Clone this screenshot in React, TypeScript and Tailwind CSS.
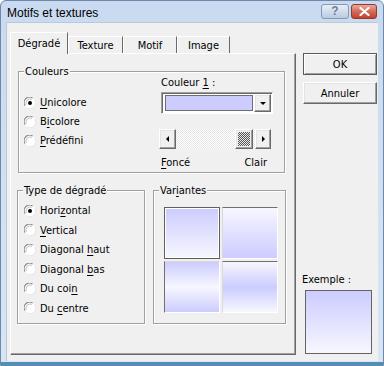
import React from "react";

const font = "font-['Tahoma','DejaVu_Sans_Condensed','Liberation_Sans',sans-serif]";

const raised =
  "border border-t-white border-l-white border-r-[#696969] border-b-[#696969] shadow-[inset_-1px_-1px_0_#a0a0a0,inset_1px_1px_0_#e3e3e3]";

const Radio = ({ checked }: { checked?: boolean }) => (
  <svg width="12" height="12" viewBox="0 0 12 12" className="shrink-0">
    <circle cx="6" cy="6" r="5.5" fill="#fff" />
    <path d="M1.1 8.6 A5.4 5.4 0 0 1 8.6 1.1" stroke="#8c8c8c" strokeWidth="1.1" fill="none" />
    <path d="M2.3 7.8 A4.2 4.2 0 0 1 7.8 2.3" stroke="#bdbdbd" strokeWidth="1" fill="none" />
    <path d="M10.9 3.4 A5.4 5.4 0 0 1 3.4 10.9" stroke="#e6e6e6" strokeWidth="1" fill="none" />
    {checked && <circle cx="6" cy="6" r="2" fill="#000" />}
  </svg>
);

// label with one underlined mnemonic letter
const Mn = ({ text, u }: { text: string; u: number }) => (
  <span>
    {text.slice(0, u)}
    <span className="underline underline-offset-2">{text[u]}</span>
    {text.slice(u + 1)}
  </span>
);

const RadioRow = ({ checked, text, u, h }: { checked?: boolean; text: string; u: number; h: string }) => (
  <div className={`flex items-center gap-[4px] ${h}`}>
    <Radio checked={checked} />
    <Mn text={text} u={u} />
  </div>
);

const GroupBox = ({
  title,
  className,
  children,
}: {
  title: React.ReactNode;
  className: string;
  children: React.ReactNode;
}) => (
  <div
    className={`relative border border-[#a0a0a0] shadow-[inset_1px_1px_0_#fff,1px_1px_0_#fff] ${className}`}
  >
    <div className="absolute -top-[7px] left-[5px] bg-[#f0f0f0] px-px leading-[13px]">{title}</div>
    {children}
  </div>
);

const Arrow = ({ dir }: { dir: "l" | "r" | "d" }) => (
  <svg width="8" height="8" viewBox="0 0 8 8">
    {dir === "l" && <path d="M5 1 L2 4 L5 7 Z" fill="#000" />}
    {dir === "r" && <path d="M3 1 L6 4 L3 7 Z" fill="#000" />}
    {dir === "d" && <path d="M1 3 L7 3 L4 6 Z" fill="#000" />}
  </svg>
);

const Tab = ({ label, w, active }: { label: string; w: string; active?: boolean }) =>
  active ? (
    <div
      className={`relative z-10 -mb-px flex h-[22px] items-start justify-center border border-b-0 border-t-white border-l-white border-r-[#696969] bg-[#f0f0f0] pt-[4px] ${w}`}
    >
      {label}
    </div>
  ) : (
    <div
      className={`flex h-[17px] items-start justify-center border border-b-0 border-t-white border-l-white border-r-[#696969] pt-[2px] ${w}`}
    >
      {label}
    </div>
  );

export default function App() {
  return (
    <div
      className={`flex h-[366px] w-[384px] flex-col overflow-hidden rounded-t-[6px] border border-[#6d88a8] bg-linear-to-b from-[#c9daf0] to-[#d9e5f3] text-[11px] leading-[13px] text-black ${font}`}
    >
      {/* title bar */}
      <div className="flex h-[21px] shrink-0 items-start justify-between">
        <div className="pl-[6px] pt-[5px] font-['Segoe_UI','Liberation_Sans',sans-serif] text-[12px] leading-[14px]">
          Motifs et textures
        </div>
        <div className="flex gap-[2px] pr-[6px] pt-[3px]">
          <div className="flex h-[15px] w-[28px] items-center justify-center rounded-[3px] border border-[#8698b2] bg-linear-to-b from-[#e8eef7] to-[#b9cbe2] font-['Liberation_Sans',sans-serif] text-[12px] font-bold text-[#6f7f96]">
            ?
          </div>
          <div className="flex h-[15px] w-[26px] items-center justify-center rounded-[3px] border border-[#8e3b30] bg-linear-to-b from-[#e9a89c] via-[#d46a59] to-[#c2402c]">
            <svg width="11" height="9" viewBox="0 0 11 9">
              <path d="M1.5 1 L9.5 8 M9.5 1 L1.5 8" stroke="#fff" strokeWidth="2.2" strokeLinecap="round" />
            </svg>
          </div>
        </div>
      </div>

      {/* client area */}
      <div className="mx-[5px] flex h-[339px] shrink-0 border-l border-t border-[#b9c9dc] bg-[#f0f0f0] pl-[3px]">
        {/* tabs + panel */}
        <div className="flex w-[286px] flex-col pt-[8px]">
          <div className="flex h-[22px] items-end">
            <Tab label="Dégradé" w="w-[58px]" active />
            <Tab label="Texture" w="w-[55px]" />
            <Tab label="Motif" w="w-[54px]" />
            <Tab label="Image" w="w-[53px]" />
          </div>
          <div className="flex h-[302px] flex-col border border-t-white border-l-white border-r-[#696969] border-b-[#696969] pl-[6px] pt-[17px] shadow-[inset_-1px_-1px_0_#a0a0a0]">
            <GroupBox title="Couleurs" className="ml-px flex h-[102px] w-[267px]">
              <div className="flex flex-1 flex-col pl-[5px] pt-[21px]">
                <RadioRow checked text="Unicolore" u={0} h="h-[19px]" />
                <RadioRow text="Bicolore" u={1} h="h-[19px]" />
                <RadioRow text="Prédéfini" u={0} h="h-[19px]" />
              </div>
              <div className="flex w-[125px] flex-col pr-[11px] pt-[4px]">
                <div className="ml-[2px]">
                  Couleur <span className="underline underline-offset-2">1</span> :
                </div>
                <div className="ml-[2px] mt-[3px] flex h-[22px] w-[112px] border border-t-[#a0a0a0] border-l-[#a0a0a0] border-r-white border-b-white bg-white p-px shadow-[inset_1px_1px_0_#696969]">
                  <div className="m-px ml-[2px] flex-1 border border-[#6e6e6e] bg-[#ccccff]" />
                  <div className={`flex w-[17px] items-center justify-center bg-[#f0f0f0] ${raised}`}>
                    <Arrow dir="d" />
                  </div>
                </div>
                <div className="mt-[15px] flex h-[20px] w-[112px]">
                  <div className={`flex w-[17px] items-center justify-center bg-[#f0f0f0] ${raised}`}>
                    <Arrow dir="l" />
                  </div>
                  <div className="flex flex-1 justify-end bg-[repeating-conic-gradient(#e6e6e6_0_25%,#ffffff_0_50%)] bg-size-[2px_2px] pr-[2px]">
                    <div className={`w-[18px] p-[2px] ${raised} bg-[#f0f0f0]`}>
                      <div className="h-full w-full bg-[repeating-conic-gradient(#555555_0_25%,#e8e8e8_0_50%)] bg-size-[2px_2px]" />
                    </div>
                  </div>
                  <div className={`flex w-[16px] items-center justify-center bg-[#f0f0f0] ${raised}`}>
                    <Arrow dir="r" />
                  </div>
                </div>
                <div className="mt-[7px] flex w-[111px] justify-between pl-[2px] pr-[3px]">
                  <Mn text="Foncé" u={0} />
                  <span>Clair</span>
                </div>
              </div>
            </GroupBox>

            <div className="mt-[17px] flex gap-[8px]">
              <GroupBox title="Type de dégradé" className="h-[134px] w-[128px]">
                <div className="flex flex-col pl-[6px] pt-[10px]">
                  <RadioRow checked text="Horizontal" u={4} h="h-[19.5px]" />
                  <RadioRow text="Vertical" u={0} h="h-[19.5px]" />
                  <RadioRow text="Diagonal haut" u={9} h="h-[19.5px]" />
                  <RadioRow text="Diagonal bas" u={9} h="h-[19.5px]" />
                  <RadioRow text="Du coin" u={6} h="h-[19.5px]" />
                  <RadioRow text="Du centre" u={3} h="h-[19.5px]" />
                </div>
              </GroupBox>
              <GroupBox title={<Mn text="Variantes" u={3} />} className="h-[134px] w-[133px]">
                <div className="grid grid-cols-[56px_56px] grid-rows-[52px_52px] gap-[2px] pl-[10px] pt-[16px]">
                  <div className="border border-[#5f5f5f] bg-linear-to-b from-[#ccccff] to-[#f7f7ff] shadow-[inset_0_0_0_1px_#fff]" />
                  <div className="border border-t-[#707070] border-l-[#d8d8d8] border-r-white border-b-white bg-linear-to-b from-[#f7f7ff] to-[#ccccff]" />
                  <div className="border border-t-[#d8d8d8] border-l-[#707070] border-r-white border-b-white bg-linear-to-b from-[#ccccff] via-[#f7f7ff] to-[#ccccff]" />
                  <div className="border border-t-[#707070] border-l-[#d8d8d8] border-r-white border-b-white bg-linear-to-b from-[#f7f7ff] via-[#ccccff] to-[#f7f7ff]" />
                </div>
              </GroupBox>
            </div>
          </div>
        </div>

        {/* right column */}
        <div className="ml-[7px] flex w-[74px] flex-col pt-[30px]">
          <div className="flex h-[22px] items-center justify-center border border-[#5a5a5a] shadow-[inset_1px_1px_0_#fff,inset_-1px_-1px_0_#a0a0a0]">
            OK
          </div>
          <div className={`mt-[7px] flex h-[22px] items-center justify-center ${raised}`}>Annuler</div>
          <div className="-ml-px mt-[169px]">Exemple :</div>
          <div className="ml-[2px] mt-[4px] h-[64px] w-[67px] border border-[#646464] bg-linear-to-b from-[#ccccff] to-[#f7f7ff]" />
        </div>
      </div>

      {/* bottom frame */}
      <div className="mt-auto h-[3px] bg-[#4c8fb8]" />
    </div>
  );
}
